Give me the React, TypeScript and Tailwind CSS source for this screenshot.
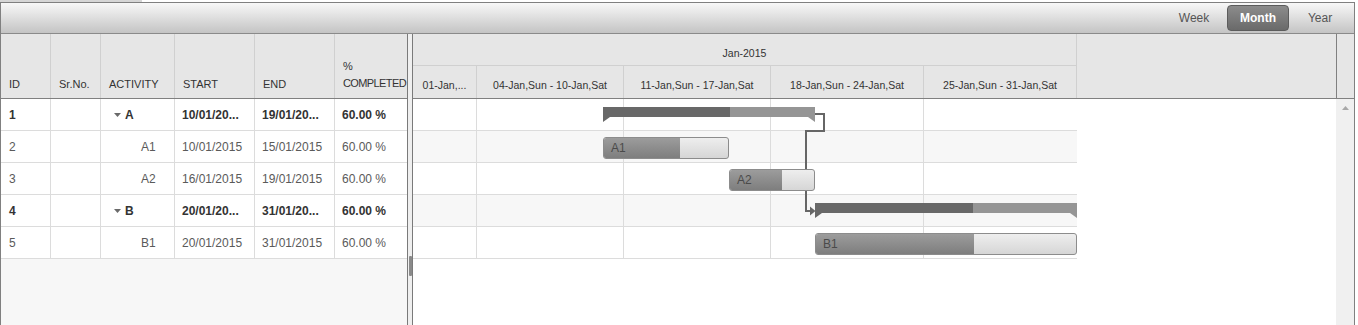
import React from "react";

type Row = {
  id: string;
  act: string;
  start: string;
  end: string;
  pct: string;
  parent: boolean;
};

const rows: Row[] = [
  { id: "1", act: "A", start: "10/01/20...", end: "19/01/20...", pct: "60.00 %", parent: true },
  { id: "2", act: "A1", start: "10/01/2015", end: "15/01/2015", pct: "60.00 %", parent: false },
  { id: "3", act: "A2", start: "16/01/2015", end: "19/01/2015", pct: "60.00 %", parent: false },
  { id: "4", act: "B", start: "20/01/20...", end: "31/01/20...", pct: "60.00 %", parent: true },
  { id: "5", act: "B1", start: "20/01/2015", end: "31/01/2015", pct: "60.00 %", parent: false },
];

const weeks = [
  { label: "01-Jan,...", w: "w-[64px]" },
  { label: "04-Jan,Sun - 10-Jan,Sat", w: "w-[147px]" },
  { label: "11-Jan,Sun - 17-Jan,Sat", w: "w-[147px]" },
  { label: "18-Jan,Sun - 24-Jan,Sat", w: "w-[153px]" },
  { label: "25-Jan,Sun - 31-Jan,Sat", w: "w-[153px]" },
];

function Caret() {
  return (
    <svg width="7" height="4" viewBox="0 0 7 4" className="shrink-0">
      <polygon points="0,0 7,0 3.5,4" fill="#6a6a6a" />
    </svg>
  );
}

function Summary({ left, top, width, done }: { left: number; top: number; width: number; done: number }) {
  return (
    <svg
      className="absolute"
      style={{ left, top }}
      width={width}
      height={16}
      viewBox={`0 0 ${width} 16`}
    >
      <rect x="0" y="0" width={width} height="10" fill="#959595" />
      <rect x="0" y="0" width={done} height="10" fill="#686868" />
      <polygon points="0,10 7,10 0,15" fill="#686868" />
      <polygon points={`${width - 7},10 ${width},10 ${width},15`} fill="#959595" />
    </svg>
  );
}

function Task({ left, top, width, done, label }: { left: number; top: number; width: number; done: number; label: string }) {
  return (
    <div
      className="absolute h-[22px] rounded-[3px] border border-[#8c8c8c] overflow-hidden flex bg-linear-to-b from-[#eeeeee] to-[#d6d6d6]"
      style={{ left, top, width }}
    >
      <div
        className="h-full bg-linear-to-b from-[#9c9c9c] to-[#7e7e7e] flex items-center pl-[7px] text-[12px] text-[#4a4a4a]"
        style={{ width: done }}
      >
        {label}
      </div>
    </div>
  );
}

export default function App() {
  const gridCols = ["w-[50px]", "w-[50px]", "w-[74px]", "w-[80px]", "w-[80px]", "w-[72px]"];
  return (
    <div className="h-[325px] overflow-hidden bg-white font-['Liberation_Sans',Arial,sans-serif]">
      <div className="h-[2px] w-[142px] bg-[#d6d6d6]" />
      <div className="w-[1355px] h-[330px] border border-b-0 border-[#808080] flex flex-col">
        {/* toolbar */}
        <div className="h-[31px] shrink-0 border-b border-[#8a8a8a] bg-linear-to-b from-[#f8f8f8] to-[#c4c4c4] flex items-center justify-end pr-[3px]">
          <div className="w-[62px] h-[26px] mr-[2px] flex items-center justify-center text-[12px] text-[#555]">Week</div>
          <div className="w-[62px] h-[26px] rounded-[4px] border border-[#5c5c5c] bg-linear-to-b from-[#8c8c8c] to-[#6a6a6a] flex items-center justify-center text-[12px] font-bold text-white">
            Month
          </div>
          <div className="w-[62px] h-[26px] flex items-center justify-center text-[12px] text-[#555]">Year</div>
        </div>

        <div className="flex flex-1 min-h-0">
          {/* left grid */}
          <div className="w-[406px] shrink-0 flex flex-col">
            <div className="h-[65px] shrink-0 flex border-b border-[#808080] bg-[#e6e6e6] text-[11px] text-[#333]">
              {["ID", "Sr.No.", "ACTIVITY", "START", "END"].map((h, i) => (
                <div key={h} className={`${gridCols[i]} border-r border-[#d0d0d0] flex items-end pl-2 pb-[6px]`}>
                  {h}
                </div>
              ))}
              <div className="w-[72px] flex flex-col justify-end pl-2 pb-[6px] leading-[17px] whitespace-nowrap">
                <span>%</span>
                <span className="tracking-[-0.6px]">COMPLETED</span>
              </div>
            </div>
            {rows.map((r) => (
              <div
                key={r.id}
                className={`h-[32px] shrink-0 flex border-b border-[#dcdcdc] text-[12px] ${r.parent ? "font-bold text-[#333]" : "text-[#5a5a5a]"}`}
              >
                <div className="w-[50px] border-r border-[#dcdcdc] flex items-center pl-2">{r.id}</div>
                <div className="w-[50px] border-r border-[#dcdcdc]" />
                <div className="w-[74px] border-r border-[#dcdcdc] flex items-center">
                  {r.parent ? (
                    <div className="flex items-center pl-[13px] gap-[4px]">
                      <Caret />
                      <span>{r.act}</span>
                    </div>
                  ) : (
                    <span className="pl-[40px]">{r.act}</span>
                  )}
                </div>
                <div className="w-[80px] border-r border-[#dcdcdc] flex items-center pl-[7px] whitespace-nowrap">{r.start}</div>
                <div className="w-[80px] border-r border-[#dcdcdc] flex items-center pl-[7px] whitespace-nowrap">{r.end}</div>
                <div className="w-[72px] flex items-center pl-[7px] whitespace-nowrap">{r.pct}</div>
              </div>
            ))}
            <div className="flex-1 bg-[#f7f7f7]" />
          </div>

          {/* splitter */}
          <div className="w-[6px] shrink-0 border-l border-r border-[#7a7a7a] bg-[#efefef] pt-[222px] pl-[1px]">
            <div className="w-[3px] h-[20px] bg-[#8a8a8a] rounded-[1px]" />
          </div>

          {/* gantt */}
          <div className="w-[923px] shrink-0 flex flex-col">
            <div className="h-[65px] shrink-0 border-b border-[#808080] bg-[#e6e6e6] text-[10.5px] text-[#333]">
              <div className="h-[32px] w-[664px] border-b border-r border-[#d0d0d0] flex items-center justify-center pt-2">
                Jan-2015
              </div>
              <div className="h-[32px] w-[664px] flex">
                {weeks.map((w) => (
                  <div
                    key={w.label}
                    className={`${w.w} border-r border-[#d0d0d0] flex items-center justify-center pt-2 whitespace-nowrap overflow-hidden`}
                  >
                    {w.label}
                  </div>
                ))}
              </div>
            </div>
            <div className="relative flex-1 bg-white">
              {rows.map((r, ri) => (
                <div
                  key={r.id}
                  className={`h-[32px] w-[664px] flex border-b border-[#dcdcdc] ${ri % 2 === 1 ? "bg-[#f7f7f7]" : "bg-white"}`}
                >
                  {weeks.map((w, i) => (
                    <div key={w.label} className={`${w.w} h-full ${i < 4 ? "border-r border-[#dcdcdc]" : ""}`} />
                  ))}
                </div>
              ))}

              <svg className="absolute left-0 top-0" width="664" height="170" viewBox="0 0 664 170">
                <polyline
                  points="402,15 411,15 411,32 393,32 393,112 398,112"
                  fill="none"
                  stroke="#666"
                  strokeWidth="2"
                />
                <polygon points="397,107.5 402.5,112 397,116.5" fill="#666" />
              </svg>

              <Summary left={190} top={8} width={212} done={127} />
              <Task left={190} top={38} width={126} done={76} label="A1" />
              <Task left={316} top={70} width={86} done={52} label="A2" />
              <Summary left={402} top={104} width={262} done={158} />
              <Task left={402} top={134} width={262} done={158} label="B1" />
            </div>
          </div>

          {/* scroll column */}
          <div className="w-[18px] shrink-0 flex flex-col">
            <div className="h-[65px] shrink-0 border-l border-b border-[#808080] bg-[#e6e6e6]" />
            <div className="flex-1 bg-[#f0f0f0] flex justify-center pt-[7px]">
              <svg width="7" height="4" viewBox="0 0 7 4">
                <polygon points="0,4 7,4 3.5,0" fill="#a8a8a8" />
              </svg>
            </div>
          </div>
        </div>
      </div>
    </div>
  );
}
